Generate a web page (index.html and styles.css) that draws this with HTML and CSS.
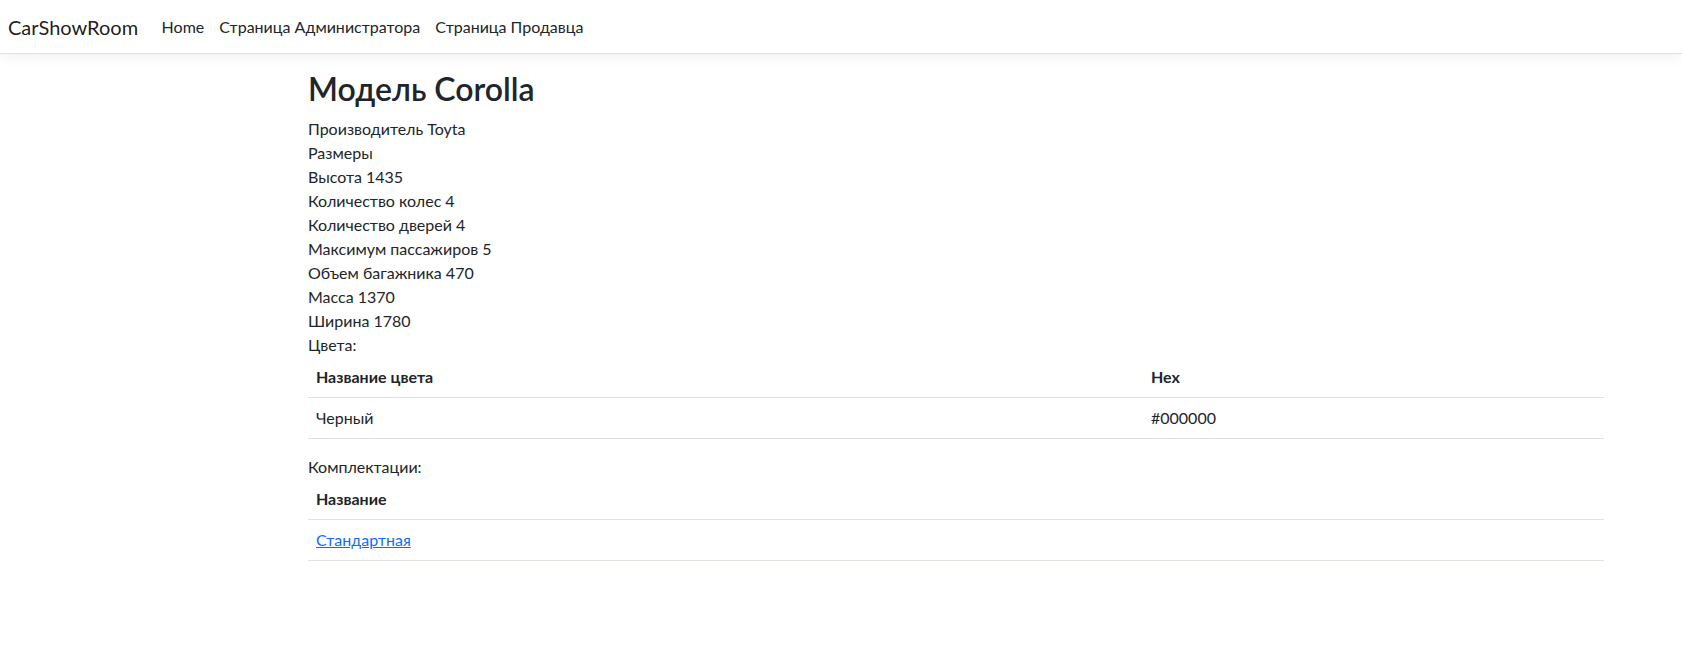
FILE: index.html
```html
<!DOCTYPE html>
<html lang="ru">
<head>
<meta charset="utf-8">
<title>CarShowRoom</title>
<link rel="stylesheet" href="styles.css">
</head>
<body>
<header class="navbar">
  <div class="navbar-inner">
    <a class="brand" href="#">CarShowRoom</a>
    <ul class="nav">
      <li><a class="nav-link" href="#">Home</a></li>
      <li><a class="nav-link" href="#">Страница Администратора</a></li>
      <li><a class="nav-link" href="#">Страница Продавца</a></li>
    </ul>
  </div>
</header>
<main class="container">
  <h1 class="title">Модель Corolla</h1>
  <div class="line">Производитель Toyta</div>
  <div class="line">Размеры</div>
  <div class="line">Высота 1435</div>
  <div class="line">Количество колес 4</div>
  <div class="line">Количество дверей 4</div>
  <div class="line">Максимум пассажиров 5</div>
  <div class="line">Объем багажника 470</div>
  <div class="line">Масса 1370</div>
  <div class="line">Ширина 1780</div>
  <div class="line">Цвета:</div>
  <table class="table">
    <thead>
      <tr><th class="col-name">Название цвета</th><th>Hex</th></tr>
    </thead>
    <tbody>
      <tr><td>Черный</td><td>#000000</td></tr>
    </tbody>
  </table>
  <div class="line">Комплектации:</div>
  <table class="table">
    <thead>
      <tr><th>Название</th></tr>
    </thead>
    <tbody>
      <tr><td><a class="link" href="#">Стандартная</a></td></tr>
    </tbody>
  </table>
</main>
</body>
</html>
```
FILE: styles.css
```css
* { box-sizing: border-box; }
html, body { margin: 0; padding: 0; }
body {
  font-family: Lato, "Noto Sans", sans-serif;
  font-size: 16px;
  line-height: 24px;
  color: #212529;
  background: #fff;
}
.navbar {
  background: #fff;
  border-bottom: 1px solid #dee2e6;
  box-shadow: 0 4px 12px rgba(0,0,0,.05);
}
.navbar-inner {
  height: 53px;
  display: flex;
  align-items: center;
  padding: 0 8px;
}
.brand {
  font-size: 20px;
  line-height: 30px;
  color: rgba(0,0,0,.9);
  text-decoration: none;
  margin-right: 16px;
}
.nav {
  display: flex;
  list-style: none;
  margin: 0;
  padding: 0;
}
.nav-link {
  display: block;
  padding: 8px 7.5px;
  color: #212529;
  text-decoration: none;
}
.container {
  max-width: 1320px;
  margin-left: 296px;
  padding: 16px 12px 0;
}
.title {
  font-size: 32px;
  font-weight: 600;
  line-height: 38.4px;
  margin: 0 0 9px;
}
.table {
  width: 100%;
  border-collapse: collapse;
  margin-bottom: 16px;
}
.table th, .table td {
  padding: 8px;
  text-align: left;
  border-bottom: 1px solid #dee2e6;
  vertical-align: top;
}
.table th { font-weight: 700; }
.col-name { width: 835px; }
.link { color: #0d6efd; text-decoration: underline; }
```
